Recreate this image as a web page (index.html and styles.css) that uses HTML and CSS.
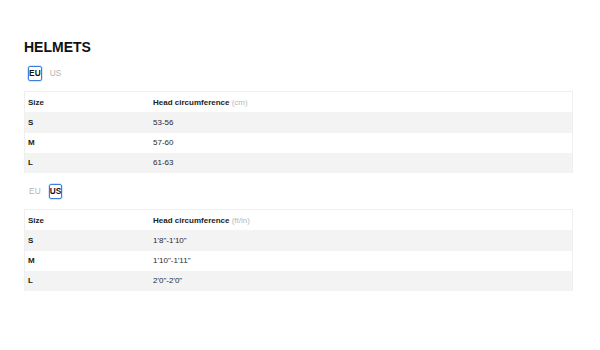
FILE: index.html
```html
<!DOCTYPE html>
<html>
<head>
<meta charset="utf-8">
<link rel="stylesheet" href="styles.css">
</head>
<body>
<main class="page">
  <h1 class="title">HELMETS</h1>

  <section class="chart">
    <div class="tabs">
      <span class="tab tab-active">EU</span>
      <span class="tab">US</span>
    </div>
    <div class="table">
      <div class="row row-head">
        <div class="cell c1">Size</div>
        <div class="cell c2">Head circumference <span class="unit">(cm)</span></div>
      </div>
      <div class="row row-alt">
        <div class="cell c1 bold">S</div>
        <div class="cell c2">53-56</div>
      </div>
      <div class="row">
        <div class="cell c1 bold">M</div>
        <div class="cell c2">57-60</div>
      </div>
      <div class="row row-alt">
        <div class="cell c1 bold">L</div>
        <div class="cell c2">61-63</div>
      </div>
    </div>
  </section>

  <section class="chart">
    <div class="tabs">
      <span class="tab">EU</span>
      <span class="tab tab-active">US</span>
    </div>
    <div class="table">
      <div class="row row-head">
        <div class="cell c1">Size</div>
        <div class="cell c2">Head circumference <span class="unit">(ft/in)</span></div>
      </div>
      <div class="row row-alt">
        <div class="cell c1 bold">S</div>
        <div class="cell c2">1'8"-1'10"</div>
      </div>
      <div class="row">
        <div class="cell c1 bold">M</div>
        <div class="cell c2">1'10"-1'11"</div>
      </div>
      <div class="row row-alt">
        <div class="cell c1 bold">L</div>
        <div class="cell c2">2'0"-2'0"</div>
      </div>
    </div>
  </section>
</main>
</body>
</html>
```

FILE: styles.css
```css
* { box-sizing: border-box; }
html, body {
  margin: 0;
  padding: 0;
  background: #ffffff;
}
body {
  font-family: "Liberation Sans", Arial, sans-serif;
  color: #1a1a1a;
}
.page {
  padding: 39px 27px 0 24px;
}
.title {
  margin: 0;
  font-size: 14px;
  line-height: 16px;
  font-weight: 700;
  color: #111;
}
.chart {
  margin-top: 11px;
}
.chart + .chart {
  margin-top: 11px;
}
.tabs {
  display: flex;
  gap: 7px;
  padding-left: 4px;
  margin-bottom: 10px;
}
.tab {
  font-size: 8.3px;
  line-height: 13px;
  font-weight: 400;
  color: #b3b3b3;
  border: 1px solid transparent;
  border-radius: 2px;
  padding: 0;
  letter-spacing: 0.1px;
}
.tab-active {
  color: #111;
  font-weight: 700;
  border-color: #3d7fe0;
  box-shadow: 0 0 0 0.5px rgba(61,127,224,0.4);
}
.table {
  border: 1px solid #efefef;
  border-bottom: none;
}
.row {
  display: flex;
  height: 20.25px;
  align-items: center;
  font-size: 8px;
  background: #fff;
}
.row-alt {
  background: #f3f3f3;
}
.cell {
  padding-left: 3px;
}
.c1 {
  width: 125px;
}
.row-head .cell {
  font-weight: 700;
  color: #222;
}
.bold {
  font-weight: 700;
}
.c2 {
  color: #2a2a2a;
}
.unit {
  font-weight: 400;
  color: #b8b8b8;
}
```
